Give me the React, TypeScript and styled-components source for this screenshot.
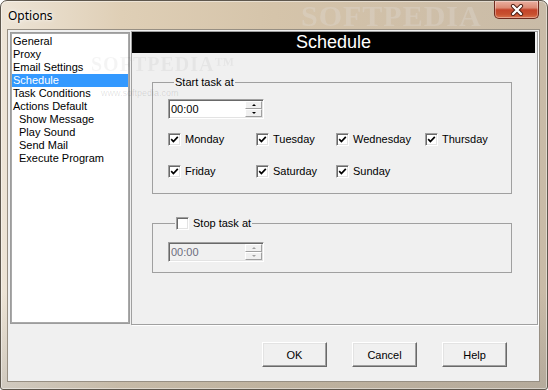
import React from "react";
import styled, { createGlobalStyle } from "styled-components";

const Global = createGlobalStyle`
  html, body { margin: 0; padding: 0; background: #fff; }
  body {
    width: 548px; height: 390px; overflow: hidden;
    font-family: "Liberation Sans", Arial, sans-serif; font-size: 11px; color: #000;
  }
  * { box-sizing: border-box; }
`;

const Window = styled.div`
  position: relative;
  width: 548px;
  height: 390px;
  border: 1px solid #5e574d;
  border-radius: 7px 7px 3px 3px;
  background:
    linear-gradient(to bottom, rgba(255,255,255,0) 75%, rgba(120,120,120,0.25) 100%),
    linear-gradient(to right, #ede4d6 0%, #dfcfb6 22%, #d5c4aa 50%, #cfbfa8 75%, #c9bba7 100%);
  box-shadow: inset 0 0 0 1px rgba(255,255,255,0.45);
  display: flex;
  flex-direction: column;
  overflow: hidden;
`;

const TitleBar = styled.div`
  height: 28px;
  display: flex;
  align-items: center;
  justify-content: space-between;
  padding-left: 7px;
  flex-shrink: 0;
`;

const TitleText = styled.span`
  font-family: "Noto Sans", "Open Sans", sans-serif;
  font-size: 12px;
  color: #000;
  text-shadow: 0 0 6px rgba(255,255,255,0.9), 0 0 3px rgba(255,255,255,0.9);
  margin-top: 1px;
`;

const CloseButton = styled.div`
  position: relative;
  z-index: 1;
  align-self: flex-start;
  width: 45px;
  height: 18px;
  margin-right: 8px;
  border: 1px solid #6e2a1e;
  border-top: none;
  border-radius: 0 0 5px 5px;
  background: linear-gradient(to bottom, #eab0a0 0%, #dc8a74 40%, #c4442a 52%, #c7502f 78%, #d9744e 100%);
  box-shadow: inset 0 0 0 1px rgba(255,255,255,0.35);
  display: flex;
  align-items: center;
  justify-content: center;
`;

const Client = styled.div`
  flex: 1;
  margin: 0 7px 7px 6px;
  background: #f0f0f0;
  border: 1px solid #978f83;
  display: flex;
  flex-direction: column;
`;

const TopRow = styled.div`
  height: 295px;
  display: flex;
  padding: 1px 1px 0 2px;
`;

const ListBox = styled.div`
  width: 120px;
  margin: 1px 0;
  background: #fff;
  border: 1px solid #9c9c9c;
  box-shadow: inset 0 0 0 1px #a9a9a9;
  padding: 2px 1px 1px;
  display: flex;
  flex-direction: column;
`;

const ListItem = styled.div<{ $depth: number; $selected?: boolean }>`
  height: 13px;
  line-height: 13px;
  padding-left: ${(p) => (p.$depth ? 7 : 1)}px;
  white-space: nowrap;
  background: ${(p) => (p.$selected ? "#3399ff" : "transparent")};
  color: ${(p) => (p.$selected ? "#fff" : "#000")};
`;

const Panel = styled.div`
  flex: 1;
  margin-left: 1px;
  border: 1px solid #a0a0a0;
  box-shadow: 1px 1px 0 #fff;
  padding-right: 2px;
  display: flex;
  flex-direction: column;
`;

const PanelHeader = styled.div`
  height: 21px;
  background: #000;
  color: #fff;
  font-family: "Liberation Sans", Arial, sans-serif;
  font-size: 18px;
  line-height: 21px;
  text-align: center;
`;

const PanelBody = styled.div`
  padding: 23px 0 0 20px;
  display: flex;
  flex-direction: column;
  gap: 23px;
`;

const GroupBox = styled.fieldset<{ $padBottom: number }>`
  margin: 0;
  width: 360px;
  min-width: 0;
  border: 1px solid #a0a0a0;
  padding: 0 0 ${(p) => p.$padBottom}px 15px;
`;

const Legend = styled.legend<{ $offset: number }>`
  margin-left: ${(p) => p.$offset}px;
  padding: 0 1px;
  height: 13px;
  line-height: 13px;
  display: flex;
  align-items: center;
  gap: 4px;
`;

const TimeField = styled.div<{ $disabled?: boolean; $top: number }>`
  margin-top: ${(p) => p.$top}px;
  width: 96px;
  height: 20px;
  display: flex;
  border: 1px solid;
  border-color: #a0a0a0 #fff #fff #a0a0a0;
  box-shadow: inset 1px 1px 0 #696969, inset -1px -1px 0 #e3e3e3;
  background: ${(p) => (p.$disabled ? "#f0f0f0" : "#fff")};
  padding: 1px;
`;

const TimeText = styled.div<{ $disabled?: boolean }>`
  flex: 1;
  padding-left: 1px;
  line-height: 17px;
  color: ${(p) => (p.$disabled ? "#6d6d7d" : "#000")};
`;

const Spinner = styled.div`
  width: 17px;
  display: flex;
  flex-direction: column;
`;

const SpinButton = styled.div<{ $disabled?: boolean; $up?: boolean }>`
  flex: 1;
  background: #f0f0f0;
  border: 1px solid;
  border-color: #fff #a0a0a0 #a0a0a0 #fff;
  display: flex;
  align-items: center;
  justify-content: center;
  &::after {
    content: "";
    width: 0;
    height: 0;
    border-left: 2px solid transparent;
    border-right: 2px solid transparent;
    ${(p) =>
      p.$up
        ? `border-bottom: 2px solid ${p.$disabled ? "#a0a0a0" : "#000"};`
        : `border-top: 2px solid ${p.$disabled ? "#a0a0a0" : "#000"};`}
  }
`;

const DaysGrid = styled.div`
  margin-top: 14px;
  display: grid;
  grid-template-columns: 88px 80px 89px auto;
  row-gap: 19px;
`;

const CheckItem = styled.label`
  display: flex;
  align-items: center;
  gap: 4px;
  height: 13px;
  line-height: 13px;
  white-space: nowrap;
`;

const Box = styled.span`
  width: 13px;
  height: 13px;
  flex-shrink: 0;
  background: #fff;
  border: 1px solid;
  border-color: #a0a0a0 #fff #fff #a0a0a0;
  box-shadow: inset 1px 1px 0 #696969, inset -1px -1px 0 #e3e3e3;
  display: flex;
  align-items: center;
  justify-content: center;
`;

const ButtonRow = styled.div`
  display: flex;
  justify-content: flex-end;
  gap: 25px;
  padding: 17px 32px 0 0;
`;

const DialogButton = styled.button`
  width: 65px;
  height: 25px;
  padding: 0;
  background: #f0f0f0;
  border: 1px solid;
  border-color: #fff #696969 #696969 #fff;
  box-shadow: inset -1px -1px 0 #a0a0a0, inset 1px 1px 0 #e3e3e3;
  font-family: "Liberation Sans", Arial, sans-serif;
  font-size: 11px;
  color: #000;
`;

const Watermark = styled.div<{ $size: number; $color: string }>`
  position: absolute;
  pointer-events: none;
  font-family: "Liberation Serif", serif;
  font-weight: bold;
  font-size: ${(p) => p.$size}px;
  line-height: ${(p) => Math.round(p.$size * 0.72)}px;
  color: ${(p) => p.$color};
  white-space: nowrap;
  letter-spacing: 1px;
  filter: blur(0.6px);
`;

const SmallMark = styled.div`
  position: absolute;
  pointer-events: none;
  font-family: "Liberation Sans", Arial, sans-serif;
  font-size: 9px;
  line-height: 9px;
  color: rgba(0, 0, 0, 0.13);
  white-space: nowrap;
`;

const Check = () => (
  <svg width="9" height="9" viewBox="0 0 9 9">
    <path d="M1.2 4.2 L3.4 6.5 L7.8 1.8" fill="none" stroke="#000" strokeWidth="1.7" />
  </svg>
);

const CheckBox = ({ checked }: { checked: boolean }) => <Box>{checked ? <Check /> : null}</Box>;

const Time = ({ disabled, top }: { disabled?: boolean; top: number }) => (
  <TimeField $disabled={disabled} $top={top}>
    <TimeText $disabled={disabled}>00:00</TimeText>
    <Spinner>
      <SpinButton $up $disabled={disabled} />
      <SpinButton $disabled={disabled} />
    </Spinner>
  </TimeField>
);

const items: { label: string; depth: number }[] = [
  { label: "General", depth: 0 },
  { label: "Proxy", depth: 0 },
  { label: "Email Settings", depth: 0 },
  { label: "Schedule", depth: 0 },
  { label: "Task Conditions", depth: 0 },
  { label: "Actions Default", depth: 0 },
  { label: "Show Message", depth: 1 },
  { label: "Play Sound", depth: 1 },
  { label: "Send Mail", depth: 1 },
  { label: "Execute Program", depth: 1 },
];

const days = ["Monday", "Tuesday", "Wednesday", "Thursday", "Friday", "Saturday", "Sunday"];

export default function App() {
  return (
    <>
      <Global />
      <Window>
        <Watermark $size={30} $color="rgba(225,222,218,0.3)" style={{ left: 300, top: 4 }}>
          SOFTPEDIA
        </Watermark>
        <TitleBar>
          <TitleText>Options</TitleText>
          <CloseButton>
            <svg width="14" height="12" viewBox="0 0 14 12">
              <path d="M3 2 L11 10 M11 2 L3 10" stroke="#4a1d12" strokeWidth="4.2" strokeLinecap="round" />
              <path d="M3 2 L11 10 M11 2 L3 10" stroke="#fff" strokeWidth="2.4" strokeLinecap="round" />
            </svg>
          </CloseButton>
        </TitleBar>
        <Client>
          <TopRow>
            <ListBox>
              {items.map((it) => (
                <ListItem key={it.label} $depth={it.depth} $selected={it.label === "Schedule"}>
                  {it.label}
                </ListItem>
              ))}
            </ListBox>
            <Panel>
              <PanelHeader>Schedule</PanelHeader>
              <PanelBody>
                <GroupBox $padBottom={15}>
                  <Legend $offset={6}>Start task at</Legend>
                  <Time top={10} />
                  <DaysGrid>
                    {days.map((d) => (
                      <CheckItem key={d}>
                        <CheckBox checked />
                        {d}
                      </CheckItem>
                    ))}
                  </DaysGrid>
                </GroupBox>
                <GroupBox $padBottom={10}>
                  <Legend $offset={7}>
                    <CheckBox checked={false} />
                    Stop task at
                  </Legend>
                  <Time disabled top={12} />
                </GroupBox>
              </PanelBody>
            </Panel>
          </TopRow>
          <ButtonRow>
            <DialogButton>OK</DialogButton>
            <DialogButton>Cancel</DialogButton>
            <DialogButton>Help</DialogButton>
          </ButtonRow>
        </Client>
        <Watermark $size={20} $color="rgba(0,0,0,0.045)" style={{ left: 90, top: 56 }}>
          SOFTPEDIA™
        </Watermark>
        <SmallMark style={{ left: 100, top: 88 }}>www.softpedia.com</SmallMark>
      </Window>
    </>
  );
}
